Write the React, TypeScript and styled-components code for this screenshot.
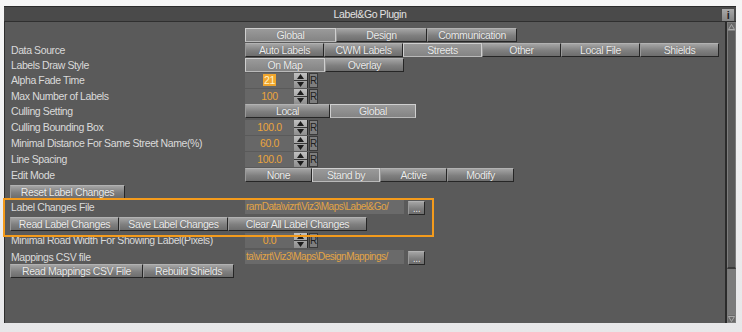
import React from "react";
import styled, { createGlobalStyle, css } from "styled-components";

const GlobalStyle = createGlobalStyle`
    html, body {
        margin: 0;
        padding: 0;
    }
    body {
        background: linear-gradient(#f6f6f6, #e7e7e9);
        font-family: "Liberation Sans", Arial, sans-serif;
        font-size: 10.5px;
        letter-spacing: -0.4px;
    }
`;

const Page = styled.div`
    position: relative;
    box-sizing: border-box;
    width: 742px;
    height: 332px;
    padding: 6px 6px 10px 4px;
`;

const Window = styled.div`
    height: 100%;
    display: flex;
    flex-direction: column;
    background: #4b4b4b;
    border-top: 1px solid #2c2c2c;
`;

const TitleBar = styled.div`
    height: 14px;
    display: grid;
    grid-template-columns: 14px 1fr 14px;
    align-items: center;
    background: #4a4a4a;
    border-bottom: 1px solid #2f2f2f;
    color: #e2e2e2;
`;

const Title = styled.div`
    text-align: center;
    grid-column: 2;
`;

const InfoButton = styled.div`
    width: 12px;
    height: 12px;
    margin-top: 1px;
    background: linear-gradient(#a8a8a8, #858585);
    color: #1e1e1e;
    font-weight: bold;
    font-size: 11px;
    line-height: 12px;
    text-align: center;
`;

const Body = styled.div`
    flex: 1;
    display: flex;
    min-height: 0;
`;

const Content = styled.div`
    flex: 1;
    background: #5a5a5a;
    border-left: 1px solid #2e2e2e;
    border-right: 2px solid #2b2b2b;
    padding: 6px 0 0 6px;
    display: flex;
    flex-direction: column;
`;

const Scrollbar = styled.div`
    width: 9px;
    display: flex;
    flex-direction: column;
    background: #5a5a5a;
`;

const ScrollArrow = styled.div`
    height: 9px;
    display: flex;
    align-items: center;
    justify-content: center;
    background: #6a6a6a;
    border: 1px solid #7d7d7d;
    box-sizing: border-box;
`;

const ScrollThumb = styled.div`
    flex: 1;
    border-left: 1px solid #7d7d7d;
    border-right: 1px solid #7d7d7d;
    border-bottom: 2px solid #3a3a3a;
    background: #5a5a5a;
`;

const ScrollTrack = styled.div`
    height: 45px;
    background: #7b7b7b;
`;

const Row = styled.div<{ $h: number }>`
    height: ${(p) => p.$h}px;
    display: grid;
    grid-template-columns: 234px auto;
    align-items: start;
`;

const Label = styled.div`
    color: #dadada;
    line-height: 14px;
    white-space: nowrap;
`;

const Controls = styled.div`
    grid-column: 2;
    display: flex;
`;

const WideControls = styled.div`
    grid-column: 1 / span 2;
    display: flex;
    margin-left: -1px;
`;

const Btn = styled.div<{ $w: number; $on?: boolean }>`
    box-sizing: border-box;
    width: ${(p) => p.$w}px;
    height: 14px;
    line-height: 12px;
    text-align: center;
    color: #ececec;
    white-space: nowrap;
    overflow: hidden;
    text-shadow: 0 0 1px rgba(0, 0, 0, 0.35);
    ${(p) =>
        p.$on
            ? css`
                  background: linear-gradient(#9a9a9a, #848484);
                  border: 1px solid #cfcfcf;
                  border-bottom-color: #b9b9b9;
              `
            : css`
                  background: linear-gradient(#a4a4a4, #7f7f7f 55%, #6d6d6d);
                  border-top: 1px solid #b2b2b2;
                  border-left: 1px solid #9a9a9a;
                  border-right: 1px solid #262626;
                  border-bottom: 1px solid #262626;
              `}
`;

const NumField = styled.div`
    width: 49px;
    height: 15px;
    background: #676767;
    color: #eaa53d;
    line-height: 15px;
    text-align: center;
`;

const Picked = styled.span`
    background: #f0a62e;
    color: #fff3c8;
    padding: 0 1px;
`;

const Spinner = styled.div`
    width: 14px;
    height: 15px;
    display: flex;
    flex-direction: column;
    background: linear-gradient(#c0c0c0, #8e8e8e);
    border-right: 1px solid #2a2a2a;
    box-sizing: border-box;
`;

const SpinHalf = styled.div<{ $down?: boolean }>`
    flex: 1;
    display: flex;
    align-items: center;
    justify-content: center;
    ${(p) => p.$down && "border-top: 1px solid #3a3a3a;"}
`;

const ResetBox = styled.div`
    width: 9px;
    height: 15px;
    margin-left: 1px;
    box-sizing: border-box;
    background: #7e7e7e;
    border: 1px solid #3a3a3a;
    color: #202020;
    font-size: 10px;
    letter-spacing: 0;
    line-height: 13px;
    text-align: center;
`;

const PathField = styled.div`
    width: 159px;
    height: 14px;
    background: #6a6a6a;
    color: #e3a445;
    font-size: 10px;
    letter-spacing: -0.5px;
    line-height: 14px;
    white-space: nowrap;
    overflow: hidden;
    padding-left: 1px;
    box-sizing: border-box;
`;

const BrowseSlot = styled.div`
    margin-left: 4px;
    margin-top: 1px;
`;

const Highlight = styled.div`
    position: absolute;
    left: 3px;
    top: 198px;
    width: 431px;
    height: 39px;
    box-sizing: border-box;
    border: 2px solid #f49b1c;
    pointer-events: none;
`;

const Arrow = ({ up }: { up?: boolean }) => (
    <svg width="7" height="5" viewBox="0 0 7 5">
        <path d={up ? "M0 5 L3.5 0 L7 5 Z" : "M0 0 L3.5 5 L7 0 Z"} fill="#1c1c1c" />
    </svg>
);

const Numeric = ({ value, picked }: { value: string; picked?: boolean }) => (
    <Controls>
        <NumField>{picked ? <Picked>{value}</Picked> : value}</NumField>
        <Spinner>
            <SpinHalf>
                <Arrow up />
            </SpinHalf>
            <SpinHalf $down>
                <Arrow />
            </SpinHalf>
        </Spinner>
        <ResetBox>R</ResetBox>
    </Controls>
);

type Opt = { text: string; w: number; on?: boolean };

const Segments = ({ items }: { items: Opt[] }) => (
    <Controls>
        {items.map((o) => (
            <Btn key={o.text} $w={o.w} $on={o.on}>
                {o.text}
            </Btn>
        ))}
    </Controls>
);

const Path = ({ value }: { value: string }) => (
    <Controls>
        <PathField>{value}</PathField>
        <BrowseSlot>
            <Btn $w={17}>...</Btn>
        </BrowseSlot>
    </Controls>
);

const App = () => {
    return (
        <Page>
            <GlobalStyle />
            <Window>
                <TitleBar>
                    <Title>Label&amp;Go Plugin</Title>
                    <InfoButton>i</InfoButton>
                </TitleBar>
                <Body>
                    <Content>
                        <Row $h={15}>
                            <Segments
                                items={[
                                    { text: "Global", w: 91, on: true },
                                    { text: "Design", w: 91 },
                                    { text: "Communication", w: 90 },
                                ]}
                            />
                        </Row>
                        <Row $h={15}>
                            <Label>Data Source</Label>
                            <Segments
                                items={[
                                    { text: "Auto Labels", w: 79 },
                                    { text: "CWM Labels", w: 79 },
                                    { text: "Streets", w: 79, on: true },
                                    { text: "Other", w: 79 },
                                    { text: "Local File", w: 79 },
                                    { text: "Shields", w: 79 },
                                ]}
                            />
                        </Row>
                        <Row $h={15}>
                            <Label>Labels Draw Style</Label>
                            <Segments
                                items={[
                                    { text: "On Map", w: 80, on: true },
                                    { text: "Overlay", w: 79 },
                                ]}
                            />
                        </Row>
                        <Row $h={16}>
                            <Label>Alpha Fade Time</Label>
                            <Numeric value="21" picked />
                        </Row>
                        <Row $h={15}>
                            <Label>Max Number of Labels</Label>
                            <Numeric value="100" />
                        </Row>
                        <Row $h={16}>
                            <Label>Culling Setting</Label>
                            <Segments
                                items={[
                                    { text: "Local", w: 85 },
                                    { text: "Global", w: 86, on: true },
                                ]}
                            />
                        </Row>
                        <Row $h={16}>
                            <Label>Culling Bounding Box</Label>
                            <Numeric value="100.0" />
                        </Row>
                        <Row $h={16}>
                            <Label>Minimal Distance For Same Street Name(%)</Label>
                            <Numeric value="60.0" />
                        </Row>
                        <Row $h={16}>
                            <Label>Line Spacing</Label>
                            <Numeric value="100.0" />
                        </Row>
                        <Row $h={17}>
                            <Label>Edit Mode</Label>
                            <Segments
                                items={[
                                    { text: "None", w: 67 },
                                    { text: "Stand by", w: 68, on: true },
                                    { text: "Active", w: 67 },
                                    { text: "Modify", w: 67 },
                                ]}
                            />
                        </Row>
                        <Row $h={15}>
                            <WideControls>
                                <Btn $w={115}>Reset Label Changes</Btn>
                            </WideControls>
                        </Row>
                        <Row $h={17}>
                            <Label>Label Changes File</Label>
                            <Path value="ramData\vizrt\Viz3\Maps\Label&Go/" />
                        </Row>
                        <Row $h={16}>
                            <WideControls>
                                <Btn $w={109}>Read Label Changes</Btn>
                                <Btn $w={109}>Save Label Changes</Btn>
                                <Btn $w={139}>Clear All Label Changes</Btn>
                            </WideControls>
                        </Row>
                        <Row $h={17}>
                            <Label>Minimal Road Width For Showing Label(Pixels)</Label>
                            <Numeric value="0.0" />
                        </Row>
                        <Row $h={14}>
                            <Label>Mappings CSV file</Label>
                            <Path value="ta\vizrt\Viz3\Maps\DesignMappings/" />
                        </Row>
                        <Row $h={15}>
                            <WideControls>
                                <Btn $w={133}>Read Mappings CSV File</Btn>
                                <Btn $w={91}>Rebuild Shields</Btn>
                            </WideControls>
                        </Row>
                    </Content>
                    <Scrollbar>
                        <ScrollArrow>
                            <svg width="7" height="6" viewBox="0 0 7 6">
                                <path d="M0.5 5.5 L3.5 0.5 L6.5 5.5 Z" fill="none" stroke="#a8a8a8" />
                            </svg>
                        </ScrollArrow>
                        <ScrollThumb />
                        <ScrollTrack />
                        <ScrollArrow>
                            <svg width="7" height="6" viewBox="0 0 7 6">
                                <path d="M0.5 0.5 L3.5 5.5 L6.5 0.5 Z" fill="none" stroke="#a8a8a8" />
                            </svg>
                        </ScrollArrow>
                    </Scrollbar>
                </Body>
            </Window>
            <Highlight />
        </Page>
    );
};

export default App;
